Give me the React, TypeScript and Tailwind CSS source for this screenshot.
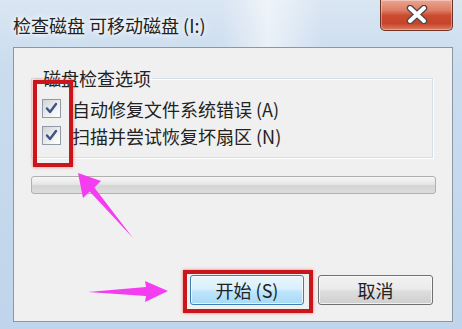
import React from "react";

const cjk = "font-['Noto_Sans_CJK_SC','Noto_Sans',sans-serif]";

function CheckBox() {
  return (
    <div className="h-[19px] w-[19px] border border-[#8f9aa6] bg-[linear-gradient(135deg,#cfd3d8,#f4f5f6_70%,#ffffff)] p-[2px]">
      <svg width="13" height="13" viewBox="0 0 13 13" className="block">
        <path
          d="M2 6.5 L5 10 L11 2"
          fill="none"
          stroke="#3f5383"
          strokeWidth="2.4"
          strokeLinecap="round"
          strokeLinejoin="round"
        />
      </svg>
    </div>
  );
}

const options = ["自动修复文件系统错误 (A)", "扫描并尝试恢复坏扇区 (N)"];

export default function App() {
  return (
    <div
      className={`relative flex h-[329px] w-[462px] flex-col overflow-hidden bg-[linear-gradient(180deg,#dae6f2_0%,#cadcee_20%,#c0d5eb_100%)] ${cjk}`}
    >
      {/* title bar */}
      <div className="flex h-[47px] items-start justify-between bg-[linear-gradient(90deg,rgba(255,255,255,0)_48%,rgba(255,255,255,0.55)_58%,rgba(255,255,255,0)_70%)] pl-[13px] pr-[9px]">
        <div className="mt-[14px] text-[18px] leading-[22px] text-[#222] [text-shadow:0_0_8px_#fff,0_0_4px_#fff]">
          检查磁盘 可移动磁盘 (I:)
        </div>
        <button className="flex h-[31px] w-[73px] items-center justify-center rounded-b-[5px] border border-t-0 border-[#6b3326] bg-[linear-gradient(180deg,#eaa592_0%,#de7c63_35%,#cc4a30_52%,#c5442b_78%,#db7d5c_100%)] pb-[1px] shadow-[inset_0_0_0_1px_rgba(255,255,255,0.35)]">
          <svg width="26" height="19" viewBox="0 0 26 19">
            <path d="M6 3 L20 16 M20 3 L6 16" stroke="#4a4a4a" strokeWidth="6.5" strokeLinecap="round" />
            <path d="M6 3 L20 16 M20 3 L6 16" stroke="#ffffff" strokeWidth="4" strokeLinecap="round" />
          </svg>
        </button>
      </div>

      {/* client area */}
      <div className="mb-[7px] ml-[13px] mr-[9px] flex flex-1 flex-col border border-[#8a97a5] bg-[#f0f0f0]">
        <fieldset className="ml-[17px] mt-[20px] w-[402px] border border-[#d5dfe5] pb-[8px] pl-[10px] shadow-[inset_1px_1px_0_#fff,1px_1px_0_#fff]">
          <legend className="px-[1px] text-[18px] leading-[20px] text-[#222]">磁盘检查选项</legend>
          <div className="pt-[7px]">
            {options.map((o) => (
              <div key={o} className="flex h-[27px] items-center gap-[11px]">
                <CheckBox />
                <span className="text-[18px] leading-[20px] text-[#222]">{o}</span>
              </div>
            ))}
          </div>
        </fieldset>

        <div className="ml-[17px] mt-[18px] h-[18px] w-[405px] rounded-[3px] border border-[#b0b0b0] bg-[linear-gradient(180deg,#f6f6f6_0%,#e6e6e6_45%,#d4d4d4_55%,#dcdcdc_100%)]" />

        <div className="mr-[19px] mt-[81px] flex justify-end gap-[14px]">
          <button className="h-[30px] w-[114px] rounded-[3px] border border-[#3c7fb1] bg-[linear-gradient(180deg,#eaf6fd_0%,#d9f0fc_45%,#bee6fd_55%,#a7d9f5_100%)] text-[18px] leading-[20px] text-[#222] shadow-[inset_0_0_0_1px_rgba(255,255,255,0.7)]">
            开始 (S)
          </button>
          <button className="h-[30px] w-[115px] rounded-[3px] border border-[#707070] bg-[linear-gradient(180deg,#f2f2f2_0%,#ebebeb_45%,#dddddd_55%,#cfcfcf_100%)] text-[18px] leading-[20px] text-[#222] shadow-[inset_0_0_0_1px_rgba(255,255,255,0.7)]">
            取消
          </button>
        </div>
      </div>

      {/* annotation highlights */}
      <div className="absolute left-[33px] top-[80px] h-[87px] w-[40px] border-[4px] border-[#c8161c] shadow-[0_0_3px_#ff7070]" />
      <div className="absolute left-[183px] top-[270px] h-[43px] w-[130px] border-[4px] border-[#c8161c] shadow-[0_0_3px_#ff7070]" />
      <svg className="pointer-events-none absolute left-0 top-0" width="462" height="329" viewBox="0 0 462 329">
        <polygon points="78,173 101,181 94.3,187.6 133,238 89.7,191.4 83,198" fill="#f43cf0" />
        <polygon points="168,291 145,281 146,287 88,292 146,296 145,302" fill="#f43cf0" />
      </svg>
    </div>
  );
}
